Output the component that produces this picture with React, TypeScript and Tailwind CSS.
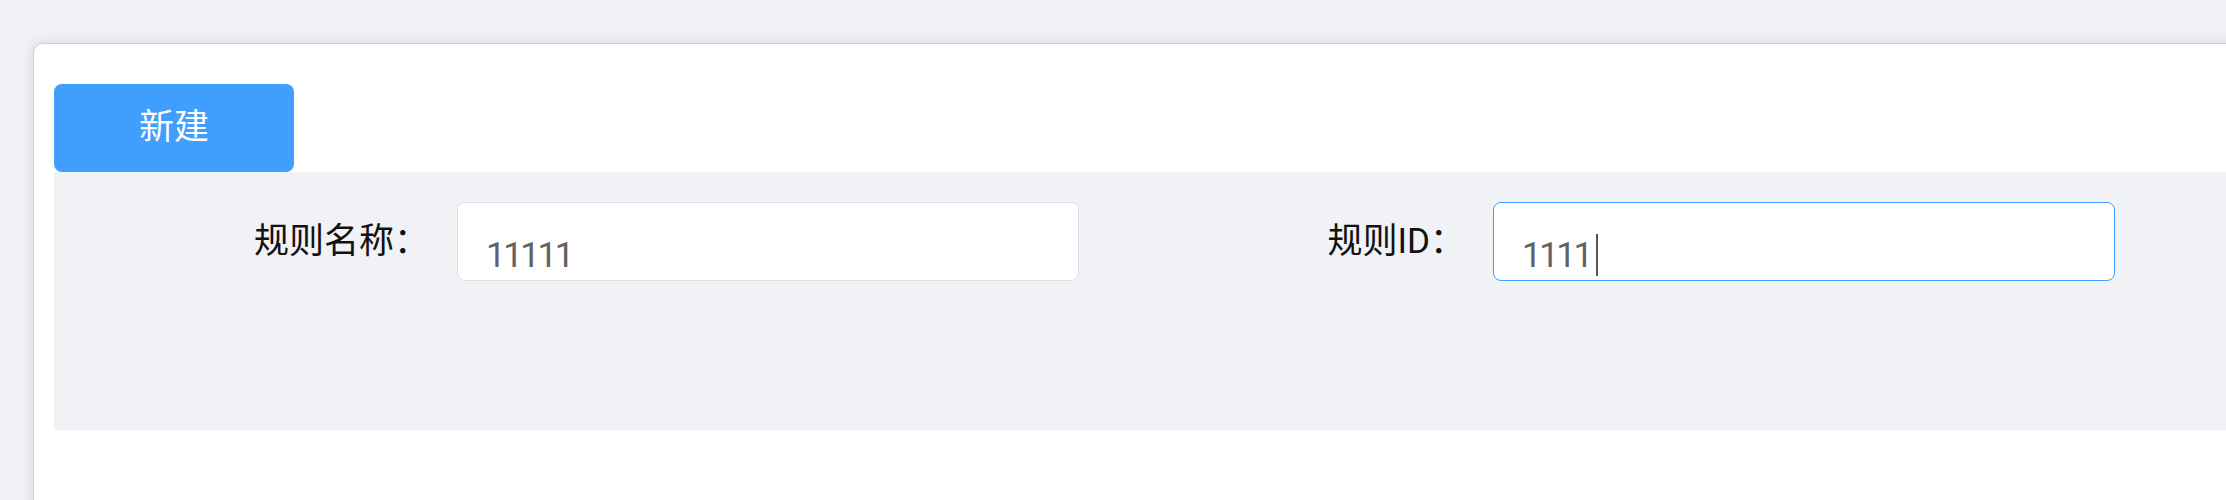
function FormItem({
    label,
    value,
    focused,
}: {
    label: string;
    value: string;
    focused?: boolean;
}) {
    return (
        <div className="flex items-center">
            <label className="w-[403px] shrink-0 pr-[28px] text-right text-[35px] leading-none text-[#111]">
                {label}
            </label>
            <div className="relative">
                <input
                    defaultValue={value}
                    spellCheck={false}
                    autoComplete="off"
                    className={`h-[79px] w-[622px] rounded-[8px] border bg-white pl-[28px] pt-[28px] font-[family-name:Roboto,sans-serif] text-[35px] tracking-[-2.5px] text-[#606266] outline-none ${
                        focused ? "border-[#409eff]" : "border-[#dcdfe6]"
                    }`}
                />
                {/* caret of the focused field */}
                {focused && <span className="absolute left-[103px] top-[32px] h-[42px] w-[2px] bg-[#555]" />}
            </div>
        </div>
    );
}

export default function App() {
    return (
        <div className="h-[500px] overflow-hidden bg-[#f0f2f5] pl-[33px] pt-[43px] font-[family-name:Roboto,'Noto_Sans_CJK_SC',sans-serif]">
            <div className="min-h-[600px] w-[2400px] rounded-[10px] border border-[#cfcfcf] bg-white pl-[20px] pt-[40px] shadow-[0_0_14px_rgba(0,0,0,0.12)]">
                <button
                    type="button"
                    className="flex h-[88px] w-[240px] items-center justify-center rounded-[8px] bg-[#409eff] text-[35px] text-white"
                >
                    新建
                </button>
                <div className="flex h-[258px] items-start gap-[11px] bg-[#f0f2f5] pt-[30px]">
                    <FormItem label="规则名称：" value="11111" />
                    <FormItem label="规则ID：" value="1111" focused />
                </div>
            </div>
        </div>
    );
}
